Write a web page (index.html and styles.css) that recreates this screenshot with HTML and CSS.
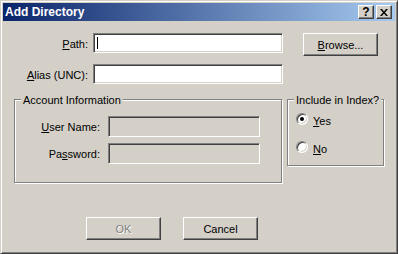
FILE: index.html
```html
<!DOCTYPE html>
<html lang="en">
<head>
    <meta charset="UTF-8">
    <meta name="viewport" content="width=device-width, initial-scale=1.0">
    <title>Add Directory</title>
    <link rel="stylesheet" href="styles.css">
</head>
<body>

    <div class="window">
        <!-- Caption bar -->
        <div class="titlebar">
            <span class="title">Add Directory</span>
            <div class="caption-btns">
                <span class="cbtn cbtn-help">?</span>
                <span class="cbtn">
                    <svg width="8" height="7" viewBox="0 0 8 7">
                        <path d="M0 0h2l2 2.5L6 0h2L5 3.5 8 7H6L4 4.5 2 7H0l3-3.5z" fill="#000"/>
                    </svg>
                </span>
            </div>
        </div>

        <div class="client">
            <!-- Path / Alias -->
            <div class="row row-path">
                <span class="lbl"><u>P</u>ath:</span>
                <div class="edit"><span class="caret"></span></div>
                <button class="btn btn-browse"><u>B</u>rowse...</button>
            </div>
            <div class="row row-alias">
                <span class="lbl"><u>A</u>lias (UNC):</span>
                <div class="edit"></div>
            </div>

            <!-- Group boxes -->
            <div class="groups">
                <fieldset class="group group-account">
                    <legend>Account Information</legend>
                    <div class="group-body">
                        <div class="row">
                            <span class="lbl"><u>U</u>ser Name:</span>
                            <div class="edit edit-disabled"></div>
                        </div>
                        <div class="row row-pass">
                            <span class="lbl">Pa<u>s</u>sword:</span>
                            <div class="edit edit-disabled"></div>
                        </div>
                    </div>
                </fieldset>
                <fieldset class="group group-index">
                    <legend>Include in Index?</legend>
                    <div class="group-body">
                        <div class="radio-row">
                            <span class="radio checked"></span>
                            <span class="radio-text"><u>Y</u>es</span>
                        </div>
                        <div class="radio-row radio-row-no">
                            <span class="radio"></span>
                            <span class="radio-text"><u>N</u>o</span>
                        </div>
                    </div>
                </fieldset>
            </div>

            <!-- Dialog buttons -->
            <div class="actions">
                <button class="btn" disabled>OK</button>
                <button class="btn">Cancel</button>
            </div>
        </div>
    </div>

</body>
</html>
```

FILE: styles.css
```css
body {
    margin: 0;
    font-family: "Liberation Sans", Arial, sans-serif;
    font-size: 11px;
    line-height: 13px;
    color: #000;
    background-color: #d4d0c8;
}
.window {
    width: 398px;
    height: 254px;
    box-sizing: border-box;
    padding: 2px;
    background-color: #d4d0c8;
    border: 1px solid;
    border-color: #d4d0c8 #404040 #404040 #d4d0c8;
    box-shadow: inset 1px 1px 0 #fff, inset -1px -1px 0 #808080;
}
.titlebar {
    height: 18px;
    display: flex;
    align-items: flex-start;
    justify-content: space-between;
    padding: 0 3px 0 2px;
    background: linear-gradient(to right, #0a246a, #a6caf0);
}
.title {
    font-size: 12px;
    font-weight: bold;
    line-height: 18px;
    color: #fff;
}
.caption-btns {
    display: flex;
    gap: 2px;
    margin-top: 2px;
}
.cbtn {
    width: 16px;
    height: 14px;
    box-sizing: border-box;
    display: flex;
    align-items: center;
    justify-content: center;
    background-color: #d4d0c8;
    border: 1px solid;
    border-color: #fff #404040 #404040 #fff;
    box-shadow: inset -1px -1px 0 #808080;
}
.cbtn-help {
    font-size: 12px;
    font-weight: bold;
    line-height: 12px;
}
.client {
    padding-top: 12px;
}
.row {
    display: flex;
    align-items: flex-start;
}
.row-alias {
    margin-top: 8px;
}
.lbl {
    width: 85px;
    margin-right: 5px;
    padding-top: 5px;
    text-align: right;
    white-space: nowrap;
}
.edit {
    width: 190px;
    height: 20px;
    box-sizing: border-box;
    padding: 3px 0 0 2px;
    background-color: #fff;
    border: 1px solid;
    border-color: #808080 #fff #fff #808080;
    box-shadow: inset 1px 1px 0 #404040, inset -1px -1px 0 #d4d0c8;
}
.caret {
    display: block;
    width: 1px;
    height: 12px;
    margin-left: 1px;
    background-color: #000;
}
.btn {
    width: 75px;
    height: 23px;
    box-sizing: border-box;
    padding: 0;
    font-family: inherit;
    font-size: 11px;
    color: #000;
    background-color: #d4d0c8;
    border: 1px solid;
    border-color: #fff #404040 #404040 #fff;
    border-radius: 0;
    box-shadow: inset -1px -1px 0 #808080;
}
.btn:disabled {
    color: #808080;
    text-shadow: 1px 1px 0 #fff;
}
.btn-browse {
    margin-left: 20px;
}
.groups {
    display: flex;
    align-items: flex-start;
    gap: 5px;
    margin: 8px 0 0 11px;
}
.group {
    margin: 0;
    padding: 0;
    box-sizing: border-box;
    min-width: 0;
    border: 1px solid #808080;
    box-shadow: 1px 1px 0 #fff, inset 1px 1px 0 #fff;
}
.group legend {
    margin-left: 6px;
    padding: 2px 2px 0 2px;
    background-color: #d4d0c8;
    line-height: 13px;
}
.group-account {
    width: 268px;
    height: 91px;
}
.group-account .group-body {
    padding-top: 9px;
}
.group-account .lbl {
    width: 85px;
    margin-right: 8px;
}
.group-account .edit {
    width: 152px;
    height: 21px;
}
.edit-disabled {
    background-color: #d4d0c8;
}
.row-pass {
    margin-top: 6px;
}
.group-index {
    width: 97px;
    height: 74px;
}
.group-index .group-body {
    padding: 6px 0 0 8px;
}
.radio-row {
    display: flex;
    align-items: flex-start;
    height: 13px;
}
.radio-row-no {
    margin-top: 15px;
}
.radio {
    position: relative;
    width: 12px;
    height: 12px;
    box-sizing: border-box;
    border-radius: 50%;
    background-color: #fff;
    border: 1px solid;
    border-color: #808080 #fff #fff #808080;
    box-shadow: inset 1px 1px 0 #404040, inset -1px -1px 0 #d4d0c8;
}
.radio.checked::after {
    content: "";
    position: absolute;
    left: 3px;
    top: 3px;
    width: 4px;
    height: 4px;
    border-radius: 50%;
    background-color: #000;
}
.radio-text {
    margin-left: 5px;
    padding-top: 2px;
    line-height: 12px;
}
.actions {
    display: flex;
    gap: 22px;
    margin: 34px 0 0 83px;
}
```
